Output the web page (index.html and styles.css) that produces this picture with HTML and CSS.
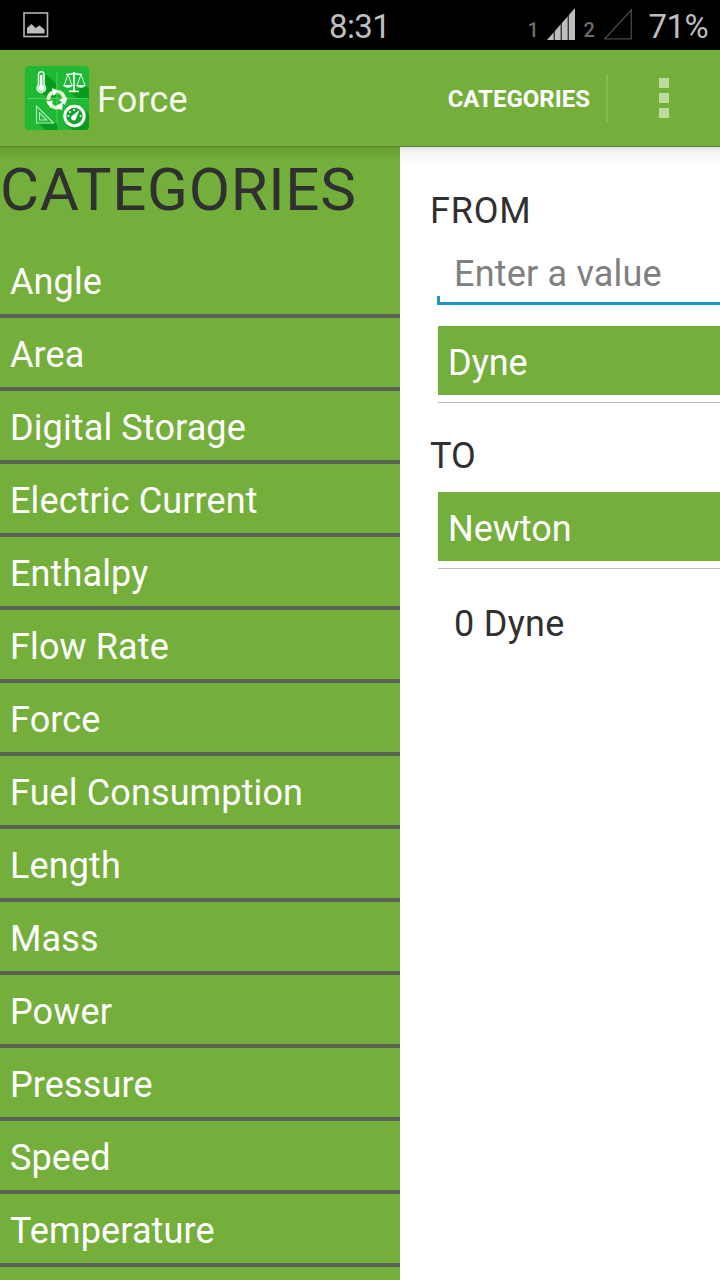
FILE: index.html
```html
<!DOCTYPE html>
<html lang="en">
<head>
  <meta charset="UTF-8" />
  <meta name="viewport" content="width=device-width, initial-scale=1" />
  <title>Force</title>
  <link rel="stylesheet" href="styles.css">
</head>
<body>
  <div class="status-bar">
    <svg class="picture-icon" width="26" height="26" viewBox="0 0 26 26">
      <rect x="1" y="1" width="23.5" height="23.5" fill="none" stroke="#b4b4b4" stroke-width="1.6" />
      <path d="M4 21.5V16l4.500-4 4 4 4-2.500 5 4v4z" fill="#bebebe" />
    </svg>
    <span class="clock">8:31</span>
    <div class="signals">
      <span class="sim">1</span>
      <svg class="signal" width="28" height="32" viewBox="0 0 28 32">
        <path d="M0 32L28 0V32z" fill="#bebebe" />
        <path d="M7.200 20v12M14.200 12v20M21.200 4v28" stroke="#000" stroke-width="1" />
      </svg>
      <span class="sim">2</span>
      <svg class="signal" width="30" height="32" viewBox="0 0 30 32">
        <path d="M2 30.800L28.300 2V30.800z" fill="none" stroke="#484848" stroke-width="1.300" />
      </svg>
      <span class="battery">71%</span>
    </div>
  </div>

  <header class="action-bar">
    <svg class="app-icon" width="64" height="64" viewBox="0 0 64 64">
      <rect width="64" height="64" rx="4" fill="#1fb935" />
      <path d="M19 7l12 10v14H22l-8-6zM61 20l3 3v9H52l-8-6zM13 57h17l2-1v8H20zM57 41l7 7v12q0 4-4 4H48l-7-5z" fill="#099a20" />
      <path d="M32 6v52M2 32.500h60" stroke="#59cf68" stroke-width="0.900" />
      <!-- thermometer -->
      <path d="M13.500 19V8.500a2.800 2.800 0 0 1 5.600 0V19a4.200 4.200 0 1 1-5.600 0z" fill="#1fb935" stroke="#dff8e1" stroke-width="1.600" />
      <path d="M16.300 9v12" stroke="#fff" stroke-width="2.400" />
      <circle cx="16.300" cy="22" r="3" fill="#fff" />
      <!-- scales -->
      <g fill="none" stroke="#f0fff0" stroke-width="1.200">
        <path d="M49 6v19M41 8.500q4 0 8-1 4 1 8 1M44 25.300h10" stroke-width="1.700" />
        <path d="M43 8.500l-4 11M43 8.500l4 11M56 8.500l-4 11M56 8.500l4 11" stroke-width="0.900" />
        <path d="M38.500 19.500q4.500 3.500 9 0zM51.500 19.500q4.500 3.500 9 0z" fill="#c9f3cd" stroke-width="1" />
      </g>
      <!-- set square -->
      <path d="M11.500 40v17h17zM14.500 47v7h7.200z" fill="none" stroke="#b4edba" stroke-width="1.100" />
      <!-- gauge -->
      <circle cx="49.500" cy="50" r="9.700" fill="#11a329" stroke="#fff" stroke-width="3" />
      <path d="M54.500 44l-3.300 8.200a2.600 2.600 0 1 1-3.800-2.600z" fill="#fff" />
      <circle cx="43.500" cy="50" r="1.100" fill="#fff" />
      <circle cx="45" cy="46" r="1.100" fill="#fff" />
      <circle cx="49" cy="44" r="1.100" fill="#fff" />
      <circle cx="55.500" cy="50" r="0.900" fill="#fff" />
      <!-- conversion arrows -->
      <g fill="none" stroke="#e6f3cb" stroke-width="3.800">
        <path d="M23.500 34a8 8 0 0 1 5-8" />
        <path d="M33 25.500a8 8 0 0 1 6 7" />
        <path d="M36 40.500a8 8 0 0 1-10-1.500" />
      </g>
      <path d="M27 22l7 3-5.500 5zM42.500 31l-2.500 8-6-5zM21 35.500l7-1-2 8z" fill="#fff" />
      <path d="M38 36l-7 4 6 4.500z" fill="#fff" />
    </svg>
    <h1 class="title">Force</h1>
    <button class="menu-button">CATEGORIES</button>
    <div class="overflow">
      <span class="dot"></span>
      <span class="dot"></span>
      <span class="dot"></span>
    </div>
  </header>

  <main class="content">
    <nav class="drawer">
      <h2>CATEGORIES</h2>
      <ul class="category-list">
        <li>Angle</li>
        <li>Area</li>
        <li>Digital Storage</li>
        <li>Electric Current</li>
        <li>Enthalpy</li>
        <li>Flow Rate</li>
        <li>Force</li>
        <li>Fuel Consumption</li>
        <li>Length</li>
        <li>Mass</li>
        <li>Power</li>
        <li>Pressure</li>
        <li>Speed</li>
        <li>Temperature</li>
      </ul>
    </nav>

    <section class="converter">
      <label class="from-label" for="value">FROM</label>
      <input type="text" id="value" class="value-input" placeholder="Enter a value" />
      <div class="spinner"><div class="unit">Dyne</div></div>
      <div class="to-label">TO</div>
      <div class="spinner"><div class="unit">Newton</div></div>
      <div class="result">0 Dyne</div>
    </section>
  </main>
</body>
</html>
```

FILE: styles.css
```css
* {
  box-sizing: border-box;
}

body {
  margin: 0;
  width: 720px;
  height: 1280px;
  overflow: hidden;
  display: flex;
  flex-direction: column;
  background: #fff;
  color: #303030;
  font-family: Roboto, sans-serif;
  font-size: 36px;
}

.status-bar {
  height: 50px;
  flex: none;
  display: grid;
  grid-template-columns: 329px auto 1fr;
  grid-template-rows: 50px;
  align-items: center;
  background: #000;
  color: #bebebe;
  font-size: 33px;
  letter-spacing: -0.6px;
  line-height: 50px;
}

.picture-icon {
  margin-left: 23px;
}

.clock {
  padding-top: 4px;
}

.signals {
  display: flex;
  justify-content: flex-end;
  padding: 6px 12px 0 0;
}

.sim {
  width: 19px;
  padding-top: 3px;
  color: #6c6c6c;
  font-size: 20px;
  font-weight: 500;
}

.signal {
  margin: 6px 9px 0 0;
}

.signal + .battery {
  margin-left: 7px;
}

.action-bar {
  height: 97px;
  flex: none;
  display: flex;
  align-items: center;
  padding: 0 51px 0 25px;
  background: #74ae3b;
  border-bottom: 1px solid #568527;
  color: #fff;
}

.title {
  flex: 1;
  margin: 4px 0 0 8px;
  color: #f3f8ec;
  font-size: 36px;
  font-weight: 400;
  letter-spacing: 0.2px;
}

.menu-button {
  height: 48px;
  padding: 2px 16px 0 0;
  background: none;
  border: none;
  border-right: 2px solid #85ba51;
  color: #fff;
  font-family: inherit;
  font-size: 24px;
  font-weight: 700;
}

.overflow {
  display: flex;
  flex-direction: column;
  gap: 5px;
  margin-left: 51px;
}

.dot {
  width: 10px;
  height: 10px;
  background: #bddb9f;
}

.content {
  flex: 1;
  min-height: 0;
  display: flex;
  overflow: hidden;
}

.drawer {
  width: 400px;
  flex: none;
  background: linear-gradient(#669d30, #74ae3b 14px);
}

.drawer h2 {
  height: 98px;
  margin: 0;
  font-size: 60px;
  font-weight: 400;
  letter-spacing: 0.7px;
  line-height: 86px;
}

.category-list {
  margin: 0;
  padding: 0;
  list-style: none;
}

.category-list li {
  height: 73px;
  padding: 2px 0 0 10px;
  border-bottom: 4px solid #5c6156;
  color: #fff;
  letter-spacing: 0.12px;
  line-height: 71px;
}

.converter {
  flex: 1;
  min-width: 0;
  padding: 42px 0 0 30px;
  background: linear-gradient(#e2e2e2, #f6f6f8 6px, #fff 20px);
}

.from-label,
.to-label {
  display: block;
  line-height: 44px;
}

.from-label {
  letter-spacing: 0.8px;
}

.value-input {
  display: block;
  width: 283px;
  height: 72px;
  margin-left: 7px;
  padding: 13px 0 0 14px;
  border: solid #1c95c4;
  border-width: 0 0 3px 3px;
  border-image: linear-gradient(to top, #1c95c4 9px, transparent 9px) 3;
  border-radius: 0;
  background: none;
  font: inherit;
  letter-spacing: 0.2px;
  outline: none;
}

.value-input::placeholder {
  color: #808080;
  opacity: 1;
}

.spinner {
  margin: 21px 0 0 8px;
  padding-bottom: 7px;
  border-bottom: 1px solid #b9b9bc;
}

.unit {
  height: 69px;
  padding: 2px 0 0 10px;
  background: #74ae3b;
  color: #fff;
  line-height: 70px;
}

.to-label {
  margin-top: 31px;
}

.to-label + .spinner {
  margin-top: 14px;
}

.result {
  margin: 33px 0 0 24px;
  letter-spacing: 0.3px;
  line-height: 44px;
}
```
